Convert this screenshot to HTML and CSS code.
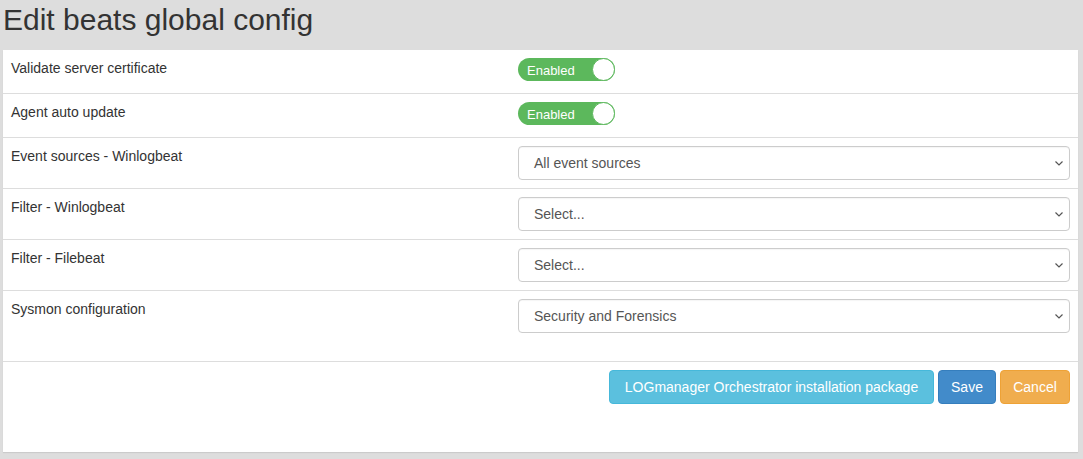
FILE: index.html
```html
<!DOCTYPE html>
<html>
<head>
<meta charset="utf-8">
<link rel="stylesheet" href="styles.css">
</head>
<body>
<h1 class="title">Edit beats global config</h1>
<div class="panel">
  <div class="row row-toggle">
    <div class="label">Validate server certificate</div>
    <div class="control"><div class="toggle"><span>Enabled</span><span class="knob"></span></div></div>
  </div>
  <div class="row row-toggle">
    <div class="label">Agent auto update</div>
    <div class="control"><div class="toggle"><span>Enabled</span><span class="knob"></span></div></div>
  </div>
  <div class="row">
    <div class="label">Event sources - Winlogbeat</div>
    <div class="control"><div class="select"><span>All event sources</span><svg class="chev" width="8" height="5" viewBox="0 0 8 5"><path d="M0.5 0.5l3.5 3.5 3.5-3.5" fill="none" stroke="#555" stroke-width="1.2"/></svg></div></div>
  </div>
  <div class="row">
    <div class="label">Filter - Winlogbeat</div>
    <div class="control"><div class="select"><span>Select...</span><svg class="chev" width="8" height="5" viewBox="0 0 8 5"><path d="M0.5 0.5l3.5 3.5 3.5-3.5" fill="none" stroke="#555" stroke-width="1.2"/></svg></div></div>
  </div>
  <div class="row">
    <div class="label">Filter - Filebeat</div>
    <div class="control"><div class="select"><span>Select...</span><svg class="chev" width="8" height="5" viewBox="0 0 8 5"><path d="M0.5 0.5l3.5 3.5 3.5-3.5" fill="none" stroke="#555" stroke-width="1.2"/></svg></div></div>
  </div>
  <div class="row row-last">
    <div class="label">Sysmon configuration</div>
    <div class="control"><div class="select"><span>Security and Forensics</span><svg class="chev" width="8" height="5" viewBox="0 0 8 5"><path d="M0.5 0.5l3.5 3.5 3.5-3.5" fill="none" stroke="#555" stroke-width="1.2"/></svg></div></div>
  </div>
  <div class="footer">
    <button class="btn btn-info">LOGmanager Orchestrator installation package</button>
    <button class="btn btn-primary">Save</button>
    <button class="btn btn-warning">Cancel</button>
  </div>
</div>
</body>
</html>
```
FILE: styles.css
```css
html, body {
  margin: 0;
  padding: 0;
}
body {
  background: #dddddd;
  font-family: "Liberation Sans", Arial, sans-serif;
  color: #333;
  width: 1083px;
  height: 459px;
  overflow: hidden;
}
.title {
  margin: 0;
  padding: 0 0 0 3px;
  height: 50px;
  font-size: 30px;
  line-height: 40px;
  font-weight: normal;
  color: #333;
}
.panel {
  margin-left: 3px;
  width: 1075px;
  height: 402px;
  background: #fff;
  box-shadow: 0 1px 1px rgba(0,0,0,0.08);
  display: flex;
  flex-direction: column;
}
.row {
  display: grid;
  grid-template-columns: 507px 552px;
  padding: 8px 8px 8px 8px;
  border-bottom: 1px solid #dddddd;
}
.row-toggle {
  height: 27px;
}
.row-last {
  padding-bottom: 28px;
}
.label {
  font-size: 14px;
  line-height: 20px;
  color: #333;
}
.control {
  display: flex;
  align-items: flex-start;
}
.toggle {
  width: 97px;
  height: 23px;
  border-radius: 12px;
  background: #5cb85c;
  color: #fff;
  font-size: 13px;
  display: flex;
  align-items: center;
  justify-content: space-between;
  padding-left: 9px;
  box-sizing: border-box;
}
.toggle span:first-child {
  line-height: 23px;
  padding-top: 1px;
}
.knob {
  width: 23px;
  height: 23px;
  border-radius: 50%;
  background: #fff;
  border: 1px solid #5cb85c;
  box-sizing: border-box;
}
.select {
  width: 552px;
  height: 34px;
  box-sizing: border-box;
  border: 1px solid #cccccc;
  border-radius: 4px;
  display: flex;
  align-items: center;
  justify-content: space-between;
  padding: 0 6px 0 15px;
  font-size: 14px;
  color: #555;
  box-shadow: inset 0 1px 1px rgba(0,0,0,0.04);
}
.chev {
  display: block;
  margin-top: 1px;
}
.footer {
  display: flex;
  justify-content: flex-end;
  gap: 4px;
  padding: 8px 8px 0 8px;
}
.btn {
  font-family: "Liberation Sans", Arial, sans-serif;
  font-size: 14px;
  line-height: 20px;
  height: 34px;
  padding: 6px 12px;
  border-radius: 4px;
  border: 1px solid transparent;
  color: #fff;
  box-sizing: border-box;
}
.btn-info {
  background: #5bc0de;
  border-color: #46b8da;
  width: 325px;
}
.btn-primary {
  background: #428bca;
  border-color: #357ebd;
  width: 58px;
}
.btn-warning {
  background: #f0ad4e;
  border-color: #eea236;
  width: 70px;
}
```
